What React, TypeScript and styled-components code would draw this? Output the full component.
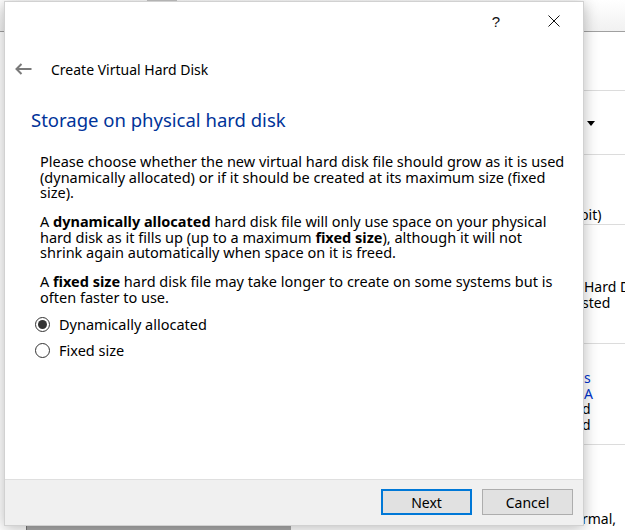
import React from 'react';
import styled, { createGlobalStyle } from 'styled-components';

const GlobalStyle = createGlobalStyle`
  html, body { margin: 0; padding: 0; background: #fff; overflow: hidden; }
  body { font-family: "Noto Sans", "Liberation Sans", sans-serif; color: #000; }
`;

const Desktop = styled.div`
  position: relative;
  width: 625px;
  height: 530px;
  overflow: hidden;
  background: #fff;
`;

/* ---------- background main window ---------- */
const BackWindow = styled.div`
  position: absolute;
  inset: 0;
  display: flex;
  flex-direction: column;
  background: #fff;
  font-size: 14px;
`;

const Toolbar = styled.div`
  height: 31px;
  flex: none;
  background: linear-gradient(#ffffff, #f1f1f1);
  border-bottom: 1px solid #a0a0a0;
  display: flex;
`;

const ToolbarTab = styled.div`
  margin-left: 147px;
  width: 30px;
  height: 1px;
  background: #c8c8c8;
`;

const MainArea = styled.div`
  flex: 1;
  display: flex;
`;

const LeftGutter = styled.div`
  width: 26px;
  flex: none;
`;

const VmList = styled.div`
  width: 264px;
  flex: none;
  background: #a9a9a9;
  border-left: 1px solid #777;
`;

const Details = styled.div`
  flex: 1;
  display: flex;
  flex-direction: column;
`;

const DetailSection = styled.div<{ $h: number; $last?: boolean }>`
  height: ${(p) => p.$h}px;
  flex: none;
  border-bottom: ${(p) => (p.$last ? 'none' : '1px solid #dcdcdc')};
  display: flex;
  flex-direction: column;
  box-sizing: border-box;
`;

const DetailLine = styled.div<{ $top?: number; $blue?: boolean; $indent?: number }>`
  margin-top: ${(p) => p.$top ?? 0}px;
  padding-left: ${(p) => p.$indent ?? 293}px;
  line-height: 15.5px;
  white-space: nowrap;
  color: ${(p) => (p.$blue ? '#0033cc' : '#000')};
`;

const ComboArrow = styled.div`
  margin-top: 30px;
  margin-left: 296px;
  width: 0;
  height: 0;
  border-left: 4px solid transparent;
  border-right: 4px solid transparent;
  border-top: 5px solid #000;
`;

/* ---------- dialog ---------- */
const Dialog = styled.div`
  position: absolute;
  left: 4px;
  top: 1px;
  width: 580px;
  height: 525px;
  background: #fff;
  border: 1px solid rgba(0, 0, 0, 0.18);
  box-sizing: border-box;
  box-shadow: 0 2px 14px rgba(0, 0, 0, 0.28);
  display: flex;
  flex-direction: column;
`;

const TitleBar = styled.div`
  height: 38px;
  flex: none;
  display: flex;
  justify-content: flex-end;
  padding-right: 7px;
  gap: 12px;
`;

const CaptionButton = styled.div`
  width: 46px;
  height: 38px;
  display: flex;
  align-items: center;
  justify-content: center;
  font-size: 15px;
  font-family: "Liberation Sans", sans-serif;
  color: #111;
  padding-left: 2px;
  box-sizing: border-box;
`;

const HeaderRow = styled.div`
  margin-top: 17px;
  height: 24px;
  display: flex;
  align-items: center;
  padding-left: 10px;
  gap: 19px;
`;

const PageTitle = styled.div`
  font-size: 14px;
  color: #000;
`;

const Content = styled.div`
  flex: 1;
  padding-left: 35px;
  display: flex;
  flex-direction: column;
`;

const Heading = styled.div`
  margin-top: 26px;
  margin-left: -9px;
  font-size: 18.5px;
  line-height: 26px;
  color: #003399;
`;

const Para = styled.div<{ $top: number }>`
  margin-top: ${(p) => p.$top}px;
  font-size: 14.5px;
  line-height: 15.5px;
  white-space: nowrap;
  b { font-weight: 700; }
`;

const RadioRow = styled.label<{ $top: number }>`
  margin-top: ${(p) => p.$top}px;
  margin-left: -5px;
  height: 20px;
  display: flex;
  align-items: center;
  gap: 9px;
  font-size: 14.5px;
`;

const RadioCircle = styled.span<{ $checked?: boolean }>`
  width: 15px;
  height: 15px;
  border: 1px solid #333;
  border-radius: 50%;
  box-sizing: border-box;
  display: flex;
  align-items: center;
  justify-content: center;
  background: #fff;
  &::after {
    content: '';
    width: 9px;
    height: 9px;
    border-radius: 50%;
    background: #333;
    display: ${(p) => (p.$checked ? 'block' : 'none')};
  }
`;

const Footer = styled.div`
  height: 46px;
  flex: none;
  background: #f0f0f0;
  border-top: 1px solid #dfdfdf;
  display: flex;
  justify-content: flex-end;
  align-items: flex-start;
  padding: 9px 10px 0 0;
  gap: 10px;
  box-sizing: border-box;
`;

const Button = styled.div<{ $default?: boolean }>`
  width: 91px;
  height: 26px;
  box-sizing: border-box;
  background: #e1e1e1;
  border: ${(p) => (p.$default ? '2px solid #0078d7' : '1px solid #adadad')};
  display: flex;
  align-items: center;
  justify-content: center;
  font-size: 14px;
  color: #000;
`;

const CloseIcon = () => (
  <svg width="12" height="12" viewBox="0 0 12 12">
    <path d="M0.5 0.5 L11.5 11.5 M11.5 0.5 L0.5 11.5" stroke="#111" strokeWidth="1" fill="none" />
  </svg>
);

const BackArrow = () => (
  <svg width="17" height="12" viewBox="0 0 17 12">
    <path d="M1.5 6 H16.5 M6.5 1 L1.5 6 L6.5 11" stroke="#7a7a7a" strokeWidth="2" fill="none" />
  </svg>
);

export default function App() {
  return (
    <Desktop>
      <GlobalStyle />
      <BackWindow>
        <Toolbar>
          <ToolbarTab />
        </Toolbar>
        <MainArea>
          <LeftGutter />
          <VmList />
          <Details>
            <DetailSection $h={59} />
            <DetailSection $h={64}>
              <ComboArrow />
            </DetailSection>
            <DetailSection $h={70}>
              <DetailLine $top={52} $indent={289}>bit)</DetailLine>
            </DetailSection>
            <DetailSection $h={119}>
              <DetailLine $top={54}>Hard D</DetailLine>
              <DetailLine $indent={291}>sted</DetailLine>
            </DetailSection>
            <DetailSection $h={101}>
              <DetailLine $top={26} $blue>s</DetailLine>
              <DetailLine $blue>A</DetailLine>
              <DetailLine $indent={291}>d</DetailLine>
              <DetailLine $indent={291}>d</DetailLine>
            </DetailSection>
            <DetailSection $h={90} $last>
              <DetailLine $top={66} $indent={291}>rmal,</DetailLine>
            </DetailSection>
          </Details>
        </MainArea>
      </BackWindow>

      <Dialog>
        <TitleBar>
          <CaptionButton>?</CaptionButton>
          <CaptionButton>
            <CloseIcon />
          </CaptionButton>
        </TitleBar>
        <HeaderRow>
          <BackArrow />
          <PageTitle>Create Virtual Hard Disk</PageTitle>
        </HeaderRow>
        <Content>
          <Heading>Storage on physical hard disk</Heading>
          <Para $top={21}>
            Please choose whether the new virtual hard disk file should grow as it is used
            <br />
            (dynamically allocated) or if it should be created at its maximum size (fixed
            <br />
            size).
          </Para>
          <Para $top={13.5}>
            A <b>dynamically allocated</b> hard disk file will only use space on your physical
            <br />
            hard disk as it fills up (up to a maximum <b>fixed size</b>), although it will not
            <br />
            shrink again automatically when space on it is freed.
          </Para>
          <Para $top={13.5}>
            A <b>fixed size</b> hard disk file may take longer to create on some systems but is
            <br />
            often faster to use.
          </Para>
          <RadioRow $top={9}>
            <RadioCircle $checked />
            Dynamically allocated
          </RadioRow>
          <RadioRow $top={6}>
            <RadioCircle />
            Fixed size
          </RadioRow>
        </Content>
        <Footer>
          <Button $default>Next</Button>
          <Button>Cancel</Button>
        </Footer>
      </Dialog>
    </Desktop>
  );
}
